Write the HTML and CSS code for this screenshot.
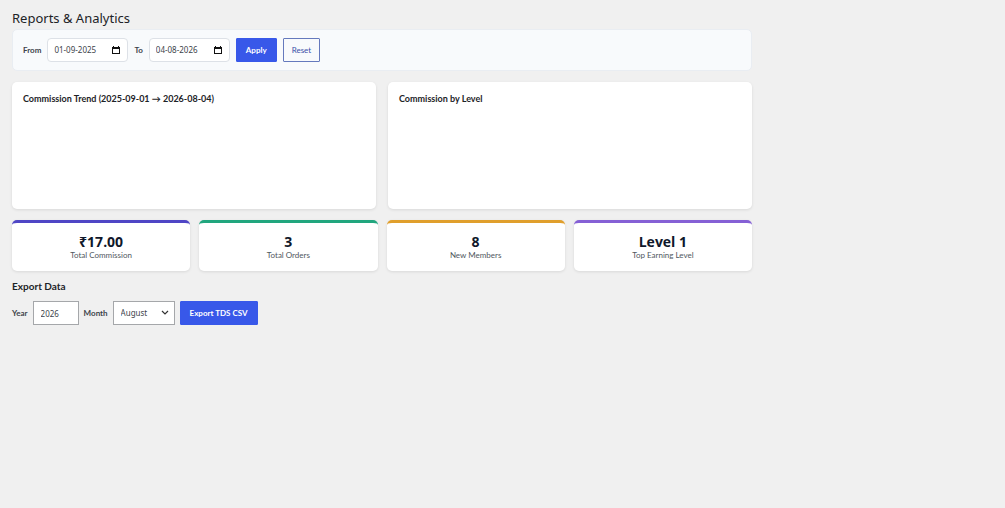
FILE: index.html
```
<!DOCTYPE html>
<html lang="en">
<head>
  <meta charset="utf-8">
  <meta name="viewport" content="width=device-width, initial-scale=1.0">
  <title>Reports &amp; Analytics</title>
  <link rel="stylesheet" href="styles.css">
</head>

<body>
  <div class="wrap">
    <h1 class="page-title">Reports &amp; Analytics</h1>

    <!-- Date range filter -->
    <form class="filter-bar" method="get">
      <label for="from">From</label>
      <div class="date-field">
        <input id="from" name="from" type="text" value="01-09-2025">
        <button type="button" aria-label="Choose start date">
          <svg viewBox="0 0 8 8" width="8" height="8"><path d="M1 0h1v1h4V0h1v1h1v7H0V1h1zM1 3v4h6V3z" fill="#111" fill-rule="evenodd"/></svg>
        </button>
      </div>
      <label for="to">To</label>
      <div class="date-field">
        <input id="to" name="to" type="text" value="04-08-2026">
        <button type="button" aria-label="Choose end date">
          <svg viewBox="0 0 8 8" width="8" height="8"><path d="M1 0h1v1h4V0h1v1h1v7H0V1h1zM1 3v4h6V3z" fill="#111" fill-rule="evenodd"/></svg>
        </button>
      </div>
      <button class="btn btn-primary" type="submit">Apply</button>
      <button class="btn btn-outline" type="reset">Reset</button>
    </form>

    <!-- Charts -->
    <div class="charts">
      <div class="chart-card">
        <h2>Commission Trend (2025-09-01 → 2026-08-04)</h2>
      </div>
      <div class="chart-card">
        <h2>Commission by Level</h2>
      </div>
    </div>

    <!-- Summary -->
    <div class="stats">
      <div class="stat stat-commission">
        <div class="stat-value">₹17.00</div>
        <div class="stat-label">Total Commission</div>
      </div>
      <div class="stat stat-orders">
        <div class="stat-value">3</div>
        <div class="stat-label">Total Orders</div>
      </div>
      <div class="stat stat-members">
        <div class="stat-value">8</div>
        <div class="stat-label">New Members</div>
      </div>
      <div class="stat stat-level">
        <div class="stat-value">Level 1</div>
        <div class="stat-label">Top Earning Level</div>
      </div>
    </div>

    <!-- Export -->
    <h2 class="section-title">Export Data</h2>
    <form class="export-form" method="post">
      <label for="year">Year</label>
      <input class="year" id="year" name="year" type="text" inputmode="numeric" value="2026">
      <label for="month">Month</label>
      <div class="select-field">
        <select id="month" name="month">
          <option value="1">January</option>
          <option value="2">February</option>
          <option value="3">March</option>
          <option value="4">April</option>
          <option value="5">May</option>
          <option value="6">June</option>
          <option value="7">July</option>
          <option value="8" selected>August</option>
          <option value="9">September</option>
          <option value="10">October</option>
          <option value="11">November</option>
          <option value="12">December</option>
        </select>
        <svg class="chevron" viewBox="0 0 8 6" width="8" height="6"><path d="M1 1l3 3 3-3" fill="none" stroke="#333" stroke-width="1.2"/></svg>
      </div>
      <button class="btn btn-primary" type="submit">Export TDS CSV</button>
    </form>
  </div>
</body>
</html>
```

FILE: styles.css
```
* {
  box-sizing: border-box;
}

body {
  margin: 0;
  background: #f0f0f0;
  color: #1d2327;
  font: 400 8px/12px Lato, "Noto Sans", sans-serif;
}

input, select, button {
  color: #3c434a;
  font: inherit;
}

input, select {
  font-family: "Noto Sans", sans-serif;
}

h1, h2 {
  margin: 0;
}

.wrap {
  max-width: 764px;
  padding: 8px 12px;
}

.page-title {
  font-family: "Noto Sans", sans-serif;
  font-size: 13px;
  font-weight: 400;
  line-height: 21px;
}

.filter-bar {
  display: flex;
  align-items: center;
  gap: 6px;
  padding: 8px 10px;
  background: #f8fafc;
  border: 1px solid #e9edf2;
  border-radius: 5px;
}

label {
  color: #3c434a;
  font-weight: 700;
}

.date-field {
  display: flex;
  align-items: center;
  width: 81px;
  height: 24px;
  padding: 0 7px 0 6px;
  background: #fff;
  border: 1px solid #dde1e7;
  border-radius: 4px;
}

.date-field input {
  flex: 1;
  min-width: 0;
  padding: 0;
  background: none;
  border: 0;
}

.date-field button {
  display: flex;
  padding: 0;
  background: none;
  border: 0;
}

.btn {
  height: 24px;
  padding: 0 9px;
  border: 1px solid #3858e9;
  border-radius: 1px;
  cursor: pointer;
}

.btn-primary {
  background: #3858e9;
  color: #fff;
  font-weight: 700;
}

.btn-outline {
  padding: 0 8px;
  background: #f8fafc;
  border-color: #6579bd;
  color: #3a50a8;
}

.charts {
  display: grid;
  grid-template-columns: 1fr 1fr;
  gap: 12px;
  margin-top: 11px;
}

.chart-card {
  min-height: 127px;
  padding: 11px;
  background: #fff;
  border-radius: 5px;
  box-shadow: 0 1px 3px rgba(0, 0, 0, 0.1);
}

.chart-card h2 {
  font-size: 9px;
  font-weight: 700;
  line-height: 12px;
}

.stats {
  display: grid;
  grid-template-columns: repeat(4, 1fr);
  gap: 9px;
  margin-top: 11px;
}

.stat {
  padding: 11px 10px;
  background: #fff;
  border-top: 3px solid;
  border-radius: 5px;
  box-shadow: 0 1px 3px rgba(0, 0, 0, 0.1);
  text-align: center;
}

.stat-commission {
  border-color: #4f46c5;
}

.stat-orders {
  border-color: #21a67e;
}

.stat-members {
  border-color: #e09f2c;
}

.stat-level {
  border-color: #8560d5;
}

.stat-value {
  color: #0f172a;
  font-family: "Open Sans", "Noto Sans", sans-serif;
  font-size: 14px;
  font-weight: 700;
  line-height: 16px;
}

.stat-label {
  color: #50575e;
  line-height: 10px;
}

.section-title {
  margin-top: 8px;
  font-size: 10px;
  font-weight: 700;
  line-height: 14px;
}

.export-form {
  display: flex;
  align-items: center;
  gap: 5px;
  margin-top: 8px;
}

.year {
  width: 46px;
  height: 24px;
  padding: 0 7px;
  background: #fff;
  border: 1px solid #a5a7aa;
}

/* the select's own arrow is replaced with a chevron */
.select-field {
  position: relative;
}

.select-field select {
  width: 62px;
  height: 24px;
  padding: 0 7px;
  appearance: none;
  background: #fff;
  border: 1px solid #a5a7aa;
  border-radius: 0;
}

.chevron {
  position: absolute;
  top: 9px;
  right: 6px;
  pointer-events: none;
}
```
